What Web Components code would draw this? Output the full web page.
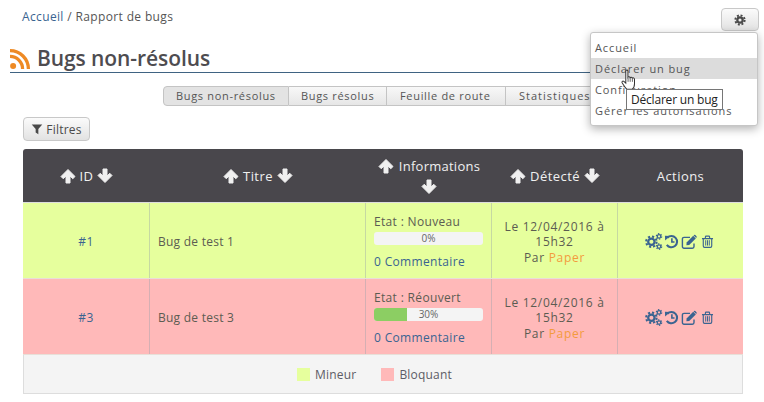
<!DOCTYPE html>
<html>
<head>
<meta charset="utf-8">
<title>Rapport de bugs</title>
<style>
  html, body { margin: 0; background: #fff; }
  body { width: 764px; height: 402px; overflow: hidden; font: 12px "Open Sans", sans-serif; color: #555; letter-spacing: .5px; }
</style>
</head>
<body>
<bug-page></bug-page>
<script>
const ICONS = {
  up: '<path d="M8 1.5 15 8.5 12.8 10.7 10 8V15H6V8L3.2 10.7 1 8.5Z" fill="currentColor" stroke="currentColor" stroke-linejoin="round"/>',
  down: '<path d="M8 14.5 15 7.5 12.8 5.3 10 8V1H6V8L3.2 5.3 1 7.5Z" fill="currentColor" stroke="currentColor" stroke-linejoin="round"/>',
  filter: '<path d="M1 2H15L9.8 8V15L6.2 12.5V8Z" fill="currentColor"/>',
  cog: '<circle cx="8" cy="8" r="3.6" fill="none" stroke="currentColor" stroke-width="3"/><circle cx="8" cy="8" r="6.2" fill="none" stroke="currentColor" stroke-width="2.6" stroke-dasharray="2.6 2.27"/>',
  cogs: '<g fill="none" stroke="currentColor"><circle cx="6" cy="8.2" r="3" stroke-width="2.1"/><circle cx="6" cy="8.2" r="4.9" stroke-width="2" stroke-dasharray="2 1.85"/><circle cx="13.2" cy="3.2" r="1.6" stroke-width="1.1"/><circle cx="13.2" cy="3.2" r="2.5" stroke-width="1.2" stroke-dasharray="1.3 1.32"/><circle cx="13.2" cy="12.8" r="1.6" stroke-width="1.1"/><circle cx="13.2" cy="12.8" r="2.5" stroke-width="1.2" stroke-dasharray="1.3 1.32"/></g>',
  history: '<path d="M3.6 4A6 6 0 1 1 3 11.6" fill="none" stroke="currentColor" stroke-width="2.2"/><path d="M1 1.8 6.6 2 1.2 7Z" fill="currentColor"/><path d="M8.4 4.6V8.6H11.2" fill="none" stroke="currentColor" stroke-width="1.7"/>',
  edit: '<path d="M13 9.5V12.6A1.6 1.6 0 0 1 11.4 14.2H3A1.6 1.6 0 0 1 1.4 12.6V5A1.6 1.6 0 0 1 3 3.4H9" fill="none" stroke="currentColor" stroke-width="1.4"/><path d="M5.6 8.4 12.2 1.8 14.8 4.4 8.2 11 5.4 11.2Z" fill="currentColor"/><path d="M13 1.1A1 1 0 0 1 14.3 1.1L15.5 2.3A1 1 0 0 1 15.5 3.6L15.2 3.9 12.7 1.4Z" fill="currentColor"/>',
  trash: '<path d="M2.8 4.4H13.2V13.6A1.6 1.6 0 0 1 11.6 15.2H4.4A1.6 1.6 0 0 1 2.8 13.6ZM1.2 4.4H14.8M5.4 4V2.4A1 1 0 0 1 6.4 1.4H9.6A1 1 0 0 1 10.6 2.4V4" fill="none" stroke="currentColor" stroke-width="1.4"/><path d="M5.8 6.4V13M8 6.4V13M10.2 6.4V13" stroke="currentColor" stroke-width="1.2"/>',
  rss: '<circle cx="3.1" cy="16.9" r="3" fill="currentColor"/><path d="M0 7.4A12.6 12.6 0 0 1 12.6 20M0 1.6A18.4 18.4 0 0 1 18.4 20" fill="none" stroke="currentColor" stroke-width="3.3"/>'
}

class UiIcon extends HTMLElement {
  connectedCallback() {
    const size = this.getAttribute('size') || 16
    const box = this.getAttribute('name') === 'rss' ? '0 0 20 20' : '0 0 16 16'
    this.attachShadow({ mode: 'open' }).innerHTML = `
      <style>
        :host { display: inline-flex; width: ${size}px; height: ${size}px; }
        svg { width: 100%; height: 100%; overflow: visible; }
      </style>
      <svg viewBox="${box}">${ICONS[this.getAttribute('name')]}</svg>`
  }
}

class BreadCrumb extends HTMLElement {
  connectedCallback() {
    this.attachShadow({ mode: 'open' }).innerHTML = `
      <style>
        :host { display: block; padding-top: 1px; font-size: 12px; line-height: 16px; letter-spacing: .36px; color: #555; }
        a { color: #3a6491; text-decoration: none; }
      </style>
      <a>Accueil</a> / Rapport de bugs`
  }
}

class PageTitle extends HTMLElement {
  connectedCallback() {
    this.attachShadow({ mode: 'open' }).innerHTML = `
      <style>
        :host { display: flex; align-items: center; gap: 7px; height: 25px; padding-bottom: 1px; border-bottom: 1px solid #3f6382; color: #4e4c50; font-size: 21px; font-weight: 600; letter-spacing: -.08px; line-height: 25px; }
        ui-icon { color: #ee8a24; }
      </style>
      <ui-icon name="rss" size="20"></ui-icon><span><slot></slot></span>`
  }
}

class TabBar extends HTMLElement {
  connectedCallback() {
    this.attachShadow({ mode: 'open' }).innerHTML = `
      <style>
        :host { display: flex; }
        span { box-sizing: border-box; height: 20px; line-height: 18px; border: 1px solid #c4c4c4; border-left-width: 0; background: linear-gradient(#f8f8f8, #e6e6e6); font-size: 11px; letter-spacing: .68px; color: #555; white-space: nowrap; }
        span.on { width: 126px; padding-left: 12px; border-left-width: 1px; border-radius: 4px 0 0 4px; background: #e3e3e3; }
        .b { width: 98px; padding-left: 12px; }
        .c { width: 119px; padding-left: 13px; }
        .d { width: 100px; padding-left: 13px; letter-spacing: 1px; }
      </style>
      <span class="on">Bugs non-résolus</span><span class="b">Bugs résolus</span><span class="c">Feuille de route</span><span class="d">Statistiques</span>`
  }
}

class PlainButton extends HTMLElement {
  connectedCallback() {
    this.attachShadow({ mode: 'open' }).innerHTML = `
      <style>
        :host { display: inline-flex; align-items: center; justify-content: center; box-sizing: border-box; gap: 3px; border: 1px solid #c8c8c8; border-radius: 4px; background: linear-gradient(#fbfbfb, #e2e2e2); color: #4a4a4a; font-size: 12px; letter-spacing: .2px; }
      </style>
      <slot></slot>`
  }
}

class StateBar extends HTMLElement {
  connectedCallback() {
    const value = Number(this.getAttribute('value'))
    this.attachShadow({ mode: 'open' }).innerHTML = `
      <style>
        :host { display: block; position: relative; height: 13px; border-radius: 3px; background: #f4f4f4; overflow: hidden; font-size: 10px; line-height: 13px; text-align: center; color: #666; letter-spacing: 0; }
        i { position: absolute; left: 0; top: 0; bottom: 0; width: ${value}%; background: #8cce63; }
        span { position: relative; }
      </style>
      <i></i><span>${value}%</span>`
  }
}

class BugRow extends HTMLElement {
  connectedCallback() {
    const a = n => this.getAttribute(n)
    this.attachShadow({ mode: 'open' }).innerHTML = `
      <style>
        :host { display: grid; grid-template-columns: 127px 216px 126px 126px 125px; height: 75px; border-bottom: 1px solid #e8dfd8; background: ${a('color')}; font-size: 12px; color: #5c5c52; }
        div { display: flex; flex-direction: column; justify-content: center; box-sizing: border-box; border-right: 1px solid rgba(150,160,170,.4); line-height: 15px; padding-top: 1px; }
        div:last-child { border-right: 0; }
        .id { align-items: center; color: #3a6491; }
        .title { padding-left: 8px; letter-spacing: .25px; }
        .info { padding: 2px 8px 0; letter-spacing: .33px; }
        .info state-bar { margin: 3px 0 9px; }
        .info a { color: #3a6491; }
        .date { align-items: center; text-align: center; letter-spacing: .7px; padding-top: 2px; }
        .date span:last-child { margin-top: 1px; }
        .date b { font-weight: 400; color: #f39b3d; }
        .actions { flex-direction: row; align-items: center; justify-content: center; gap: 2px; color: #3a6491; padding: 2px 2px 0 0; }
        .actions ui-icon:last-child { margin-left: 2px; }
      </style>
      <div class="id">${a('bug-id')}</div>
      <div class="title">${a('title')}</div>
      <div class="info">
        <span>Etat : ${a('state')}</span>
        <state-bar value="${a('progress')}"></state-bar>
        <a>0 Commentaire</a>
      </div>
      <div class="date"><span>Le 12/04/2016 à<br>15h32</span><span>Par <b>Paper</b></span></div>
      <div class="actions">
        <ui-icon name="cogs" size="17"></ui-icon>
        <ui-icon name="history" size="15"></ui-icon>
        <ui-icon name="edit" size="16"></ui-icon>
        <ui-icon name="trash" size="13"></ui-icon>
      </div>`
  }
}

class BugTable extends HTMLElement {
  connectedCallback() {
    const sort = (label, wrap) => `<ui-icon name="up"></ui-icon><span>${label}</span>${wrap ? '<em></em>' : ''}<ui-icon name="down"></ui-icon>`
    this.attachShadow({ mode: 'open' }).innerHTML = `
      <style>
        :host { display: block; width: 720px; }
        header { display: grid; grid-template-columns: 127px 216px 126px 126px 125px; height: 54px; border-radius: 3px 3px 0 0; background: #49474c; color: #f0f0f0; font-size: 13px; letter-spacing: .45px; border-bottom: 1px solid #ddd; box-sizing: border-box; }
        header div { display: flex; flex-wrap: wrap; align-items: center; justify-content: center; align-content: center; gap: 0 4px; text-align: center; }
        header .wrap { gap: 2px 5px; letter-spacing: .25px; }
        header em { flex-basis: 100%; height: 0; }
        footer { display: flex; justify-content: center; align-items: center; gap: 25px; height: 39px; padding-right: 17px; box-sizing: border-box; border: solid #ddd; border-width: 0 1px 1px; background: #f4f4f4; font-size: 12px; color: #5c5c66; letter-spacing: .2px; }
        footer span { display: flex; align-items: center; gap: 5px; }
        footer i { width: 13px; height: 13px; }
      </style>
      <header>
        <div>${sort('ID')}</div>
        <div>${sort('Titre')}</div>
        <div class="wrap">${sort('Informations', true)}</div>
        <div>${sort('Détecté')}</div>
        <div>Actions</div>
      </header>
      <slot></slot>
      <footer>
        <span><i style="background:#e6ff9d"></i>Mineur</span>
        <span><i style="background:#ffb9b9"></i>Bloquant</span>
      </footer>`
  }
}

class SettingsMenu extends HTMLElement {
  connectedCallback() {
    this.attachShadow({ mode: 'open' }).innerHTML = `
      <style>
        :host { display: block; position: absolute; left: 590px; top: 32px; width: 168px; height: 94px; box-sizing: border-box; padding-top: 4px; border: 1px solid #c6c6c6; border-radius: 3px; background: #fff; box-shadow: 0 3px 10px rgba(0,0,0,.3); font-size: 11px; letter-spacing: .9px; color: #555; z-index: 2; }
        div { height: 21px; line-height: 21px; padding: 0 4px; white-space: nowrap; }
        .hover { background: #dcdcdc; }
        .tip { position: absolute; left: 35px; top: 56px; box-sizing: border-box; width: 97px; height: 21px; padding: 0 4px; line-height: 19px; background: #fff; border: 1px solid #767676; color: #222; font-size: 12px; letter-spacing: -.2px; white-space: nowrap; }
        svg { position: absolute; left: 29px; top: 36px; width: 18px; height: 22px; }
      </style>
      <div>Accueil</div>
      <div class="hover">Déclarer un bug</div>
      <div>Configuration</div>
      <div>Gérer les autorisations</div>
      <svg viewBox="0 0 18 24"><path d="M5.5 2.2C5.5.8 7.8.8 7.8 2.2V9C8.4 8 10 8.2 10.2 9.4 10.8 8.6 12.4 8.8 12.6 10 13.2 9.4 15 9.6 15 11.2V16C15 19 14 21 12.5 22H6.5C5 20.5 3.5 18 1.5 15 .8 13.8 2.2 12.6 3.4 13.6L5.5 15.4Z" fill="#fff" stroke="#333" stroke-width="1.1"/><path d="M8 9.6V14M10.3 9.6V14M12.7 10.4V14" stroke="#333" stroke-width=".8" fill="none"/></svg>
      <span class="tip">Déclarer un bug</span>`
  }
}

class BugPage extends HTMLElement {
  connectedCallback() {
    this.attachShadow({ mode: 'open' }).innerHTML = `
      <style>
        :host { display: block; position: relative; width: 764px; height: 402px; padding: 8px 0 0 10px; box-sizing: border-box; }
        .top { display: flex; justify-content: space-between; align-items: flex-start; height: 38px; padding: 0 5px 0 12px; }
        .gear { width: 38px; height: 23px; }
        page-title { width: 744px; }
        tab-bar { margin: 13px 0 0 153px; }
        .filters { width: 67px; height: 24px; margin: 11px 0 0 13px; }
        bug-table { margin: 8px 0 0 13px; }
      </style>
      <div class="top">
        <bread-crumb></bread-crumb>
        <plain-button class="gear"><ui-icon name="cog" size="12"></ui-icon></plain-button>
      </div>
      <page-title>Bugs non-résolus</page-title>
      <tab-bar></tab-bar>
      <plain-button class="filters"><ui-icon name="filter" size="12"></ui-icon>Filtres</plain-button>
      <bug-table>
        <bug-row color="#e6ff9d" bug-id="#1" title="Bug de test 1" state="Nouveau" progress="0"></bug-row>
        <bug-row color="#ffb9b9" bug-id="#3" title="Bug de test 3" state="Réouvert" progress="30"></bug-row>
      </bug-table>
      <settings-menu></settings-menu>`
  }
}

customElements.define('ui-icon', UiIcon)
customElements.define('bread-crumb', BreadCrumb)
customElements.define('page-title', PageTitle)
customElements.define('tab-bar', TabBar)
customElements.define('plain-button', PlainButton)
customElements.define('state-bar', StateBar)
customElements.define('bug-row', BugRow)
customElements.define('bug-table', BugTable)
customElements.define('settings-menu', SettingsMenu)
customElements.define('bug-page', BugPage)
</script>
</body>
</html>
